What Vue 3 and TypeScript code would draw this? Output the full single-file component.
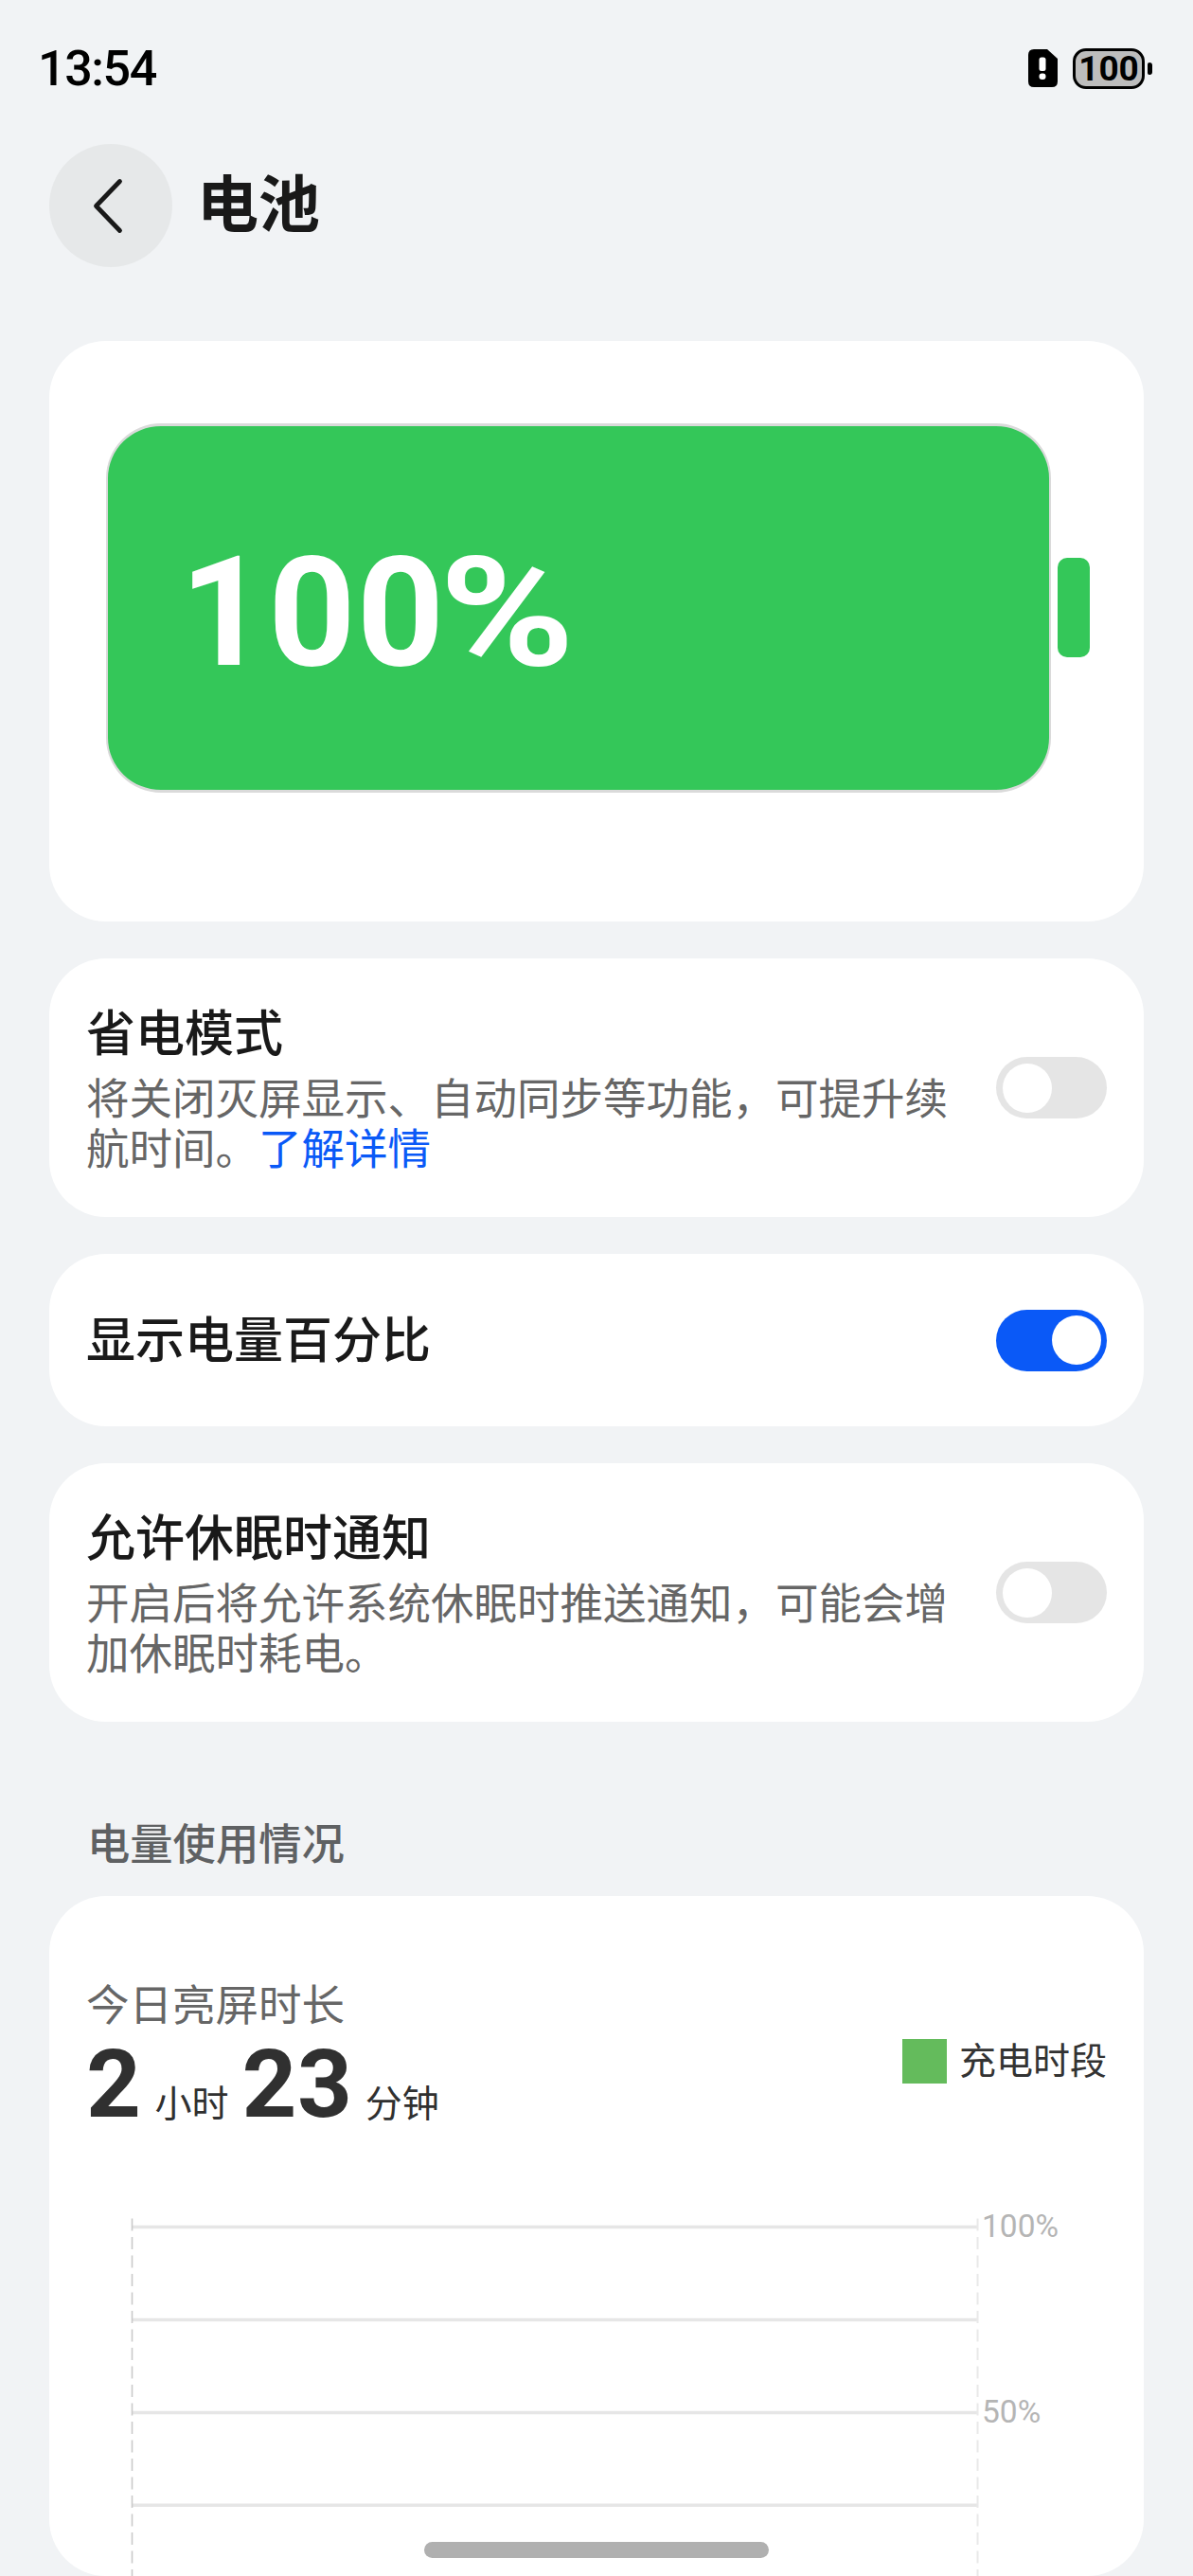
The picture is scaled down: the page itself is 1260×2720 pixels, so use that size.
<script setup lang="ts">
import { ref } from 'vue'

interface Setting {
  title: string
  description?: string
  link?: string
  enabled: boolean
}

const level = 100

const settings = ref<Setting[]>([
  {
    title: '省电模式',
    description: '将关闭灭屏显示、自动同步等功能，可提升续航时间。',
    link: '了解详情',
    enabled: false,
  },
  { title: '显示电量百分比', enabled: true },
  {
    title: '允许休眠时通知',
    description: '开启后将允许系统休眠时推送通知，可能会增加休眠时耗电。',
    enabled: false,
  },
])

const gridLines: number[] = [11.5, 109.5, 207.5, 305.3]
</script>

<template>
  <div class="screen">
    <header class="status">
      <span class="clock">13:54</span>
      <div class="indicators">
        <svg class="sim" width="31" height="40" viewBox="0 0 31 40">
          <path d="M6 0H20L31 10V34Q31 40 25 40H6Q0 40 0 34V6Q0 0 6 0Z" fill="#000" />
          <rect x="11.5" y="8.5" width="7" height="14.5" rx="2.5" fill="#fff" />
          <rect x="11.5" y="25.5" width="7" height="6.5" rx="3" fill="#fff" />
        </svg>
        <div class="mini-battery"><span class="mini-level">{{ level }}</span></div>
        <i class="mini-cap"></i>
      </div>
    </header>

    <nav class="titlebar">
      <button class="back" type="button" aria-label="返回">
        <svg width="130" height="130" viewBox="0 0 130 130">
          <path d="M74.5 39.5L49.5 65.5L74.5 91.5" fill="none" stroke="#191919" stroke-width="4.8" stroke-linecap="round" stroke-linejoin="round" />
        </svg>
      </button>
      <h1 class="title">电池</h1>
    </nav>

    <main class="content">
      <section class="card hero">
        <div class="battery"><span class="percent">{{ level }}<span class="sign">%</span></span></div>
        <i class="cap"></i>
      </section>

      <section
        v-for="item in settings"
        :key="item.title"
        class="card setting"
        :class="{ compact: !item.description }"
      >
        <div class="copy">
          <h2 class="name">{{ item.title }}</h2>
          <p v-if="item.description" class="desc">{{ item.description }}<a v-if="item.link" class="link">{{ item.link }}</a></p>
        </div>
        <button
          class="switch"
          :class="{ on: item.enabled }"
          type="button"
          role="switch"
          :aria-checked="item.enabled"
          @click="item.enabled = !item.enabled"
        >
          <i class="knob"></i>
        </button>
      </section>

      <h3 class="section-title">电量使用情况</h3>

      <section class="card usage">
        <div class="summary">
          <div class="today">
            <p class="today-label">今日亮屏时长</p>
            <p class="duration">
              <b class="num">2</b><span class="unit hours">小时</span><b class="num">23</b><span class="unit minutes">分钟</span>
            </p>
          </div>
          <div class="legend"><i class="swatch"></i><span>充电时段</span></div>
        </div>
        <div class="chart">
          <svg class="grid" width="896" height="380" viewBox="0 0 896 380">
            <line v-for="y in gridLines" :key="y" x1="2" x2="895" :y1="y" :y2="y" stroke="#e6e6e6" stroke-width="3.6" />
            <line x1="1.5" x2="1.5" y1="2.5" y2="380" stroke="#cacaca" stroke-width="1.6" stroke-dasharray="13 6.5" />
            <line x1="894.5" x2="894.5" y1="2.5" y2="380" stroke="#e9e9e9" stroke-width="2" stroke-dasharray="13 6.5" />
          </svg>
          <div class="scale">
            <span class="tick">100%</span>
            <span class="tick">50%</span>
          </div>
        </div>
      </section>
    </main>

    <i class="home"></i>
  </div>
</template>

<style>
body {
  margin: 0;
  background: #f1f3f5;
}
</style>

<style scoped>
.screen {
  position: relative;
  box-sizing: border-box;
  width: 1260px;
  height: 2720px;
  overflow: hidden;
  background: #f1f3f5;
  color: #191919;
  font-family: 'Noto Sans CJK SC', 'Noto Sans', sans-serif;
}

h1, h2, h3, p { margin: 0; font-weight: 400; }
button { border: 0; padding: 0; }
i { display: block; }

.status {
  display: flex;
  justify-content: space-between;
  height: 152px;
  padding: 0 43px 0 40px;
}

.clock {
  margin-top: 42.5px;
  font: 500 52px/60px Roboto, sans-serif;
  letter-spacing: -1.4px;
  color: #000;
}

.indicators {
  display: flex;
  align-items: center;
  height: 144px;
}

.mini-battery {
  display: flex;
  align-items: center;
  justify-content: center;
  box-sizing: border-box;
  width: 76px;
  height: 43px;
  margin-left: 16px;
  border: 3.5px solid #000;
  border-radius: 14px;
  background: #bdbdbd;
}

.mini-level {
  padding-top: 1px;
  font: 700 37px/37px Roboto, sans-serif;
  color: #000;
}

.mini-cap {
  width: 5px;
  height: 13px;
  margin-left: 3px;
  border-radius: 2px 3px 3px 2px;
  background: #000;
}

.titlebar {
  display: flex;
  align-items: center;
  gap: 26px;
  height: 130px;
  padding-left: 52px;
}

.back {
  width: 130px;
  height: 130px;
  border-radius: 50%;
  background: #e6e8e9;
}

.back svg { display: block; }

.title {
  padding-bottom: 12px;
  font-size: 65px;
  font-weight: 700;
  line-height: 76px;
}

.content {
  display: flex;
  flex-direction: column;
  gap: 39px;
  padding: 78px 52px 0;
}

.card {
  box-sizing: border-box;
  border-radius: 60px;
  background: #fff;
}

.hero {
  display: flex;
  height: 613.3px;
  padding: 87px 0 0 60px;
}

.battery {
  display: flex;
  align-items: center;
  box-sizing: border-box;
  width: 998px;
  height: 390px;
  padding-left: 76px;
  border: 3px solid #dadada;
  border-left-width: 2px;
  border-right-width: 2px;
  border-radius: 58px;
  background: #34c759;
}

.percent {
  padding-top: 10px;
  font: 700 161px/190px Roboto, sans-serif;
  letter-spacing: 1px;
  color: #fff;
}

.sign {
  display: inline-block;
  margin-left: -6px;
  transform: scaleX(1.2);
  transform-origin: left center;
}

.cap {
  width: 34px;
  height: 105px;
  margin: 142px 0 0 7px;
  border-radius: 10px;
  background: #34c759;
}

.setting {
  display: flex;
  align-items: center;
  justify-content: space-between;
  height: 273px;
  padding: 0 39px;
}

.copy {
  width: 915px;
  padding-bottom: 4px;
}

.compact { height: 182px; }

.compact .copy { padding-bottom: 8px; }

.name {
  font-size: 52px;
  font-weight: 500;
  line-height: 61px;
}

.desc {
  margin-top: 13px;
  font-size: 45.5px;
  line-height: 53.3px;
  color: #666;
}

.link {
  display: inline-block;
  color: #0a59f7;
}

.switch {
  display: flex;
  align-items: center;
  box-sizing: border-box;
  width: 117px;
  height: 65px;
  padding: 0 6.5px;
  border-radius: 33px;
  background: #e5e5e5;
}

.on {
  justify-content: flex-end;
  background: #0a59f7;
}

.knob {
  width: 52px;
  height: 52px;
  border-radius: 50%;
  background: #fff;
}

.section-title {
  margin-top: 61px;
  padding-left: 40px;
  font-size: 45.3px;
  font-weight: 500;
  line-height: 53px;
  color: #5f6163;
}

.usage {
  height: 718px;
  margin-top: -8px;
  padding: 86px 39px 0;
}

.summary {
  display: flex;
  justify-content: space-between;
}

.today-label {
  font-size: 45.5px;
  line-height: 53px;
  color: #666;
}

.duration {
  display: flex;
  align-items: baseline;
  height: 92px;
  margin-top: 8px;
  color: #303030;
  line-height: 100px;
}

.num {
  font: 700 101px/104px Roboto, sans-serif;
  letter-spacing: 0.6px;
}

.unit {
  margin-left: 14px;
  font-size: 39px;
}

.hours { margin-right: 14px; }

.minutes { margin-left: 13px; }

.legend {
  display: flex;
  align-items: center;
  gap: 13px;
  height: 47px;
  margin-top: 64.5px;
  font-size: 39px;
  line-height: 46px;
  color: #333;
}

.legend span { margin-top: -7px; }

.swatch {
  width: 47px;
  height: 47px;
  background: #64bb5c;
}

.chart {
  display: flex;
  margin: 99px 0 0 47px;
}

.grid { flex: none; }

.scale {
  display: flex;
  flex-direction: column;
  gap: 156px;
  margin: -9px 0 0 3px;
}

.tick {
  font: 400 33.5px/40px Roboto, sans-serif;
  color: #b5b5b5;
}

.home {
  position: absolute;
  left: 448px;
  bottom: 19px;
  width: 364px;
  height: 17px;
  border-radius: 9px;
  background: #b0b0b0;
}
</style>
